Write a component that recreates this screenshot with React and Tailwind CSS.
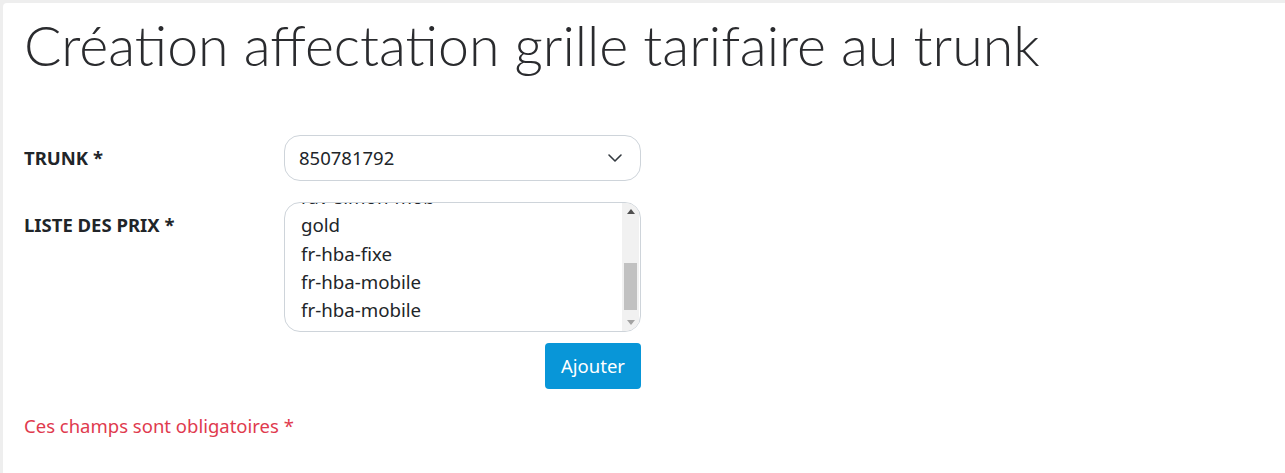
import React from "react";

const items = ["rav-simon-mob", "gold", "fr-hba-fixe", "fr-hba-mobile", "fr-hba-mobile"];

export default function App() {
  return (
    <div className="w-[1285px] h-[473px] overflow-hidden bg-[#eeeeee]">
      <div
        className="ml-[3px] mt-[3px] h-[470px] bg-white rounded-tl-[4px] pl-[21px] text-[#212529]"
        style={{ fontFamily: '"Noto Sans", "Open Sans", sans-serif' }}
      >
        <h1
          className="pt-[9px] text-[55.5px] leading-[66px] font-light text-[#2a2b2e] whitespace-nowrap"
          style={{ fontFamily: 'Lato, "Open Sans", sans-serif' }}
        >
          Création affectation grille tarifaire au trunk
        </h1>

        <div className="mt-[57px] flex items-center">
          <div className="w-[260px] text-[18.5px] font-bold leading-[26px] text-[#212529]">TRUNK *</div>
          <div className="w-[357px] h-[46px] border border-[#ced4da] rounded-[16px] flex items-center justify-between pl-[14px] pr-[17px]">
            <span className="text-[18.5px] leading-[26px]">850781792</span>
            <svg width="16" height="12" viewBox="0 0 16 12" fill="none">
              <path d="M2 3l6 6 6-6" stroke="#343a40" strokeWidth="1.6" strokeLinecap="round" strokeLinejoin="round" />
            </svg>
          </div>
        </div>

        <div className="mt-[21px] flex items-start">
          <div className="w-[260px] pt-[10px] text-[18.5px] font-bold leading-[26px] text-[#212529]">LISTE DES PRIX *</div>
          <div className="w-[357px] flex flex-col items-end">
            <div className="w-[357px] h-[130px] border border-[#ced4da] rounded-[16px] overflow-hidden flex">
              <div className="flex-1 overflow-hidden">
                <div className="-mt-[20px] pl-[16px]">
                  {items.map((it, i) => (
                    <div key={i} className="h-[28.3px] leading-[28.3px] text-[18.7px] text-[#212529] whitespace-nowrap">
                      {it}
                    </div>
                  ))}
                </div>
              </div>
              <div className="w-[17px] h-full bg-[#f1f1f1] flex flex-col items-center mr-[1px]">
                <div className="h-[17px] w-full flex items-center justify-center">
                  <svg width="8" height="5" viewBox="0 0 8 5">
                    <path d="M0 5L4 0L8 5Z" fill="#505050" />
                  </svg>
                </div>
                <div className="flex-1 w-full px-[2px] pt-[43px] pb-[2px]">
                  <div className="w-full h-[47px] bg-[#c1c1c1]" />
                </div>
                <div className="h-[17px] w-full flex items-center justify-center">
                  <svg width="8" height="5" viewBox="0 0 8 5">
                    <path d="M0 0L8 0L4 5Z" fill="#a3a3a3" />
                  </svg>
                </div>
              </div>
            </div>
            <button className="mt-[11px] w-[96px] h-[46px] rounded-[4px] bg-[#0896d8] text-white text-[18.5px] leading-[24px]">
              Ajouter
            </button>
          </div>
        </div>

        <div className="mt-[24px] text-[18.5px] leading-[26px] text-[#e03a4e]">Ces champs sont obligatoires *</div>
      </div>
    </div>
  );
}
